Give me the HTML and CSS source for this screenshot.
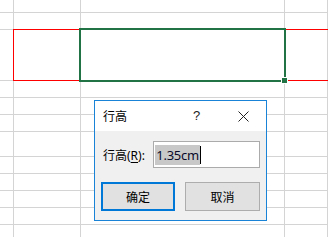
FILE: index.html
```html
<!DOCTYPE html>
<html lang="zh-CN">
<head>
  <meta charset="UTF-8" />
  <title>行高</title>
  <link rel="stylesheet" href="styles.css">
</head>
<body>
  <div class="sheet">
    <div class="row r-top"><div class="cell"></div><div class="cell"></div><div class="cell"></div><div class="cell"></div></div>
    <div class="row"><div class="cell"></div><div class="cell"></div><div class="cell"></div><div class="cell"></div></div>
    <div class="row r-tall"><div class="cell"></div><div class="cell"></div><div class="cell"></div><div class="cell"></div></div>
    <div class="row"><div class="cell"></div><div class="cell"></div><div class="cell"></div><div class="cell"></div></div>
    <div class="row"><div class="cell"></div><div class="cell"></div><div class="cell"></div><div class="cell"></div></div>
    <div class="row"><div class="cell"></div><div class="cell"></div><div class="cell"></div><div class="cell"></div></div>
    <div class="row r-mid"><div class="cell"></div><div class="cell"></div><div class="cell"></div><div class="cell"></div></div>
    <div class="row"><div class="cell"></div><div class="cell"></div><div class="cell"></div><div class="cell"></div></div>
    <div class="row"><div class="cell"></div><div class="cell"></div><div class="cell"></div><div class="cell"></div></div>
    <div class="row"><div class="cell"></div><div class="cell"></div><div class="cell"></div><div class="cell"></div></div>
    <div class="row"><div class="cell"></div><div class="cell"></div><div class="cell"></div><div class="cell"></div></div>
    <div class="row"><div class="cell"></div><div class="cell"></div><div class="cell"></div><div class="cell"></div></div>

    <div class="row-mark"></div>
    <div class="active-cell"></div>
    <div class="fill-handle"></div>
  </div>

  <div class="dialog">
    <div class="title-bar">
      <span class="title">行高</span>
      <span class="help">?</span>
      <span class="close">
        <svg width="11" height="11" viewBox="0 0 11 11">
          <path d="M0.5 0.5 L10.5 10.5 M10.5 0.5 L0.5 10.5" stroke="#222" stroke-width="1" fill="none" />
        </svg>
      </span>
    </div>
    <div class="dialog-body">
      <div class="field">
        <label class="label">行高(<u>R</u>):</label>
        <div class="input"><span class="selected">1.35cm</span><span class="caret"></span></div>
      </div>
      <div class="actions">
        <button class="btn default">确定</button>
        <button class="btn">取消</button>
      </div>
    </div>
  </div>
</body>
</html>
```

FILE: styles.css
```css
body {
  margin: 0;
  width: 328px;
  height: 237px;
  overflow: hidden;
  background: #fff;
  font-family: "Noto Sans", "Noto Sans CJK SC", sans-serif;
}
.sheet {
  position: relative;
  width: 328px;
  height: 237px;
}
.row {
  display: grid;
  grid-template-columns: 14px 67px 204px 1fr;
  height: 17px;
}
.r-top {
  height: 13px;
}
.r-tall {
  height: 51px;
}
.r-mid {
  height: 25px;
}
.cell {
  box-sizing: border-box;
  border-right: 1px solid #d4d4d4;
  border-bottom: 1px solid #d4d4d4;
}
.row-mark {
  position: absolute;
  left: 13px;
  top: 29px;
  width: 320px;
  height: 52px;
  box-sizing: border-box;
  border: 1px solid #ff0000;
  border-right: none;
}
.active-cell {
  position: absolute;
  left: 79px;
  top: 28px;
  width: 207px;
  height: 54px;
  box-sizing: border-box;
  border: 2px solid #217346;
}
.fill-handle {
  position: absolute;
  left: 281px;
  top: 77px;
  width: 5px;
  height: 5px;
  background: #217346;
  border: 1px solid #fff;
}

.dialog {
  position: absolute;
  left: 94px;
  top: 100px;
  width: 171px;
  height: 119px;
  border: 1px solid #1883d7;
  background: #f0f0f0;
  font-size: 12px;
  color: #000;
}
.title-bar {
  height: 30px;
  background: #fff;
  display: flex;
  align-items: center;
  position: relative;
}
.title {
  margin-left: 8px;
  font-size: 12px;
}
.help {
  position: absolute;
  left: 98px;
  top: 7px;
  font-family: "Liberation Sans", sans-serif;
  font-size: 13px;
  color: #222;
}
.close {
  position: absolute;
  left: 143px;
  top: 10px;
  width: 11px;
  height: 11px;
  display: flex;
}
.dialog-body {
  padding: 10px 6px 0 6px;
}
.field {
  display: flex;
  align-items: center;
}
.label {
  width: 51px;
  margin-left: 2px;
  font-size: 12px;
}
.label u {
  text-decoration-thickness: 1px;
  text-underline-offset: 2px;
}
.input {
  box-sizing: border-box;
  width: 108px;
  height: 27px;
  border: 1px solid #ababab;
  background: #fff;
  display: flex;
  align-items: center;
  padding-left: 1px;
}
.selected {
  background: #c8c8c8;
  font-size: 13px;
  line-height: 20px;
  padding: 0 1px;
  color: #0a0a2a;
  letter-spacing: -0.3px;
}
.caret {
  width: 1px;
  height: 18px;
  background: #000;
}
.actions {
  display: flex;
  gap: 10px;
  margin-top: 14px;
}
.btn {
  box-sizing: border-box;
  width: 74px;
  height: 29px;
  border: 1px solid #adadad;
  background: #e1e1e1;
  font-family: "Noto Sans CJK SC", sans-serif;
  font-size: 12px;
  color: #000;
  padding: 0;
}
.btn.default {
  border: 2px solid #0078d7;
}
.btn + .btn {
  width: 75px;
}
```
